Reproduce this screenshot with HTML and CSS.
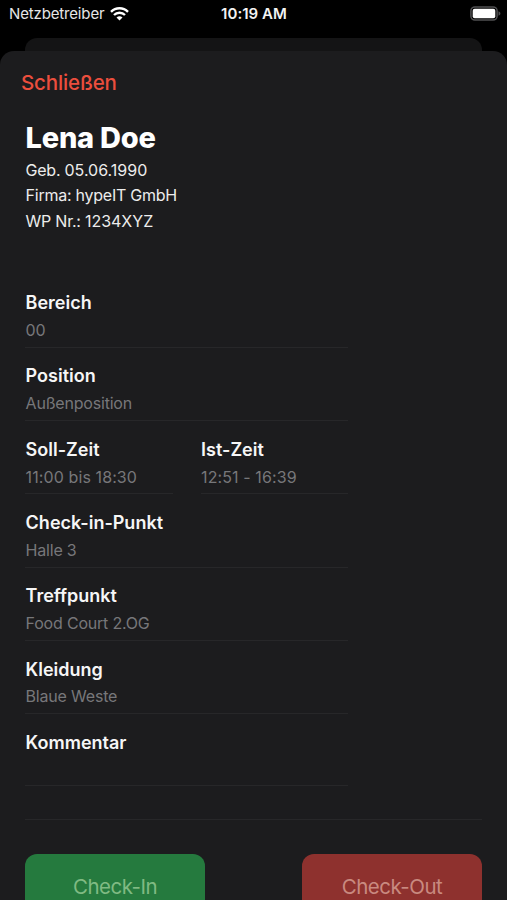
FILE: index.html
```html
<!DOCTYPE html>
<html lang="de">
<head>
    <meta charset="UTF-8">
    <meta name="viewport" content="width=device-width, initial-scale=1.0">
    <title>Schicht Details</title>
    <link rel="stylesheet" href="styles.css">
</head>
<body>
    <div class="screen">
        <header class="status-bar">
            <div class="carrier">
                <span>Netzbetreiber</span>
                <svg class="wifi" width="19" height="14" viewBox="0 0 19 14" fill="none">
                    <path d="M1 4.8a12 12 0 0 1 17 0" stroke="white" stroke-width="2.4"/>
                    <path d="M4 8a7.7 7.7 0 0 1 11 0" stroke="white" stroke-width="2.4"/>
                    <path d="M6.5 10.6a4.3 4.3 0 0 1 6 0L9.5 13.6Z" fill="white"/>
                </svg>
            </div>
            <div class="clock">10:19 AM</div>
            <svg class="battery" width="31" height="15" viewBox="0 0 31 15">
                <rect x="0.9" y="0.9" width="26.2" height="13.2" rx="4" fill="none" stroke="#505052" stroke-width="1.5"/>
                <rect x="2.7" y="2.7" width="22.6" height="9.6" rx="2" fill="white"/>
                <path d="M28.5 5.2c1.2.5 1.9 1.3 1.9 2.3s-.7 1.8-1.9 2.3z" fill="#505052"/>
            </svg>
        </header>

        <div class="sheet-behind"></div>

        <main class="sheet">
            <button class="close-button">Schließen</button>

            <section class="person">
                <h1 class="person-name">Lena Doe</h1>
                <p>Geb. <span class="digits">05.06.1990</span></p>
                <p>Firma: hypeIT GmbH</p>
                <p>WP Nr.: <span class="digits">1234XYZ</span></p>
            </section>

            <section class="fields">
                <div class="field">
                    <div class="label">Bereich</div>
                    <div class="value">00</div>
                </div>
                <div class="field">
                    <div class="label">Position</div>
                    <div class="value">Außenposition</div>
                </div>
                <div class="field-row">
                    <div class="field">
                        <div class="label">Soll-Zeit</div>
                        <div class="value digits">11:00 bis 18:30</div>
                    </div>
                    <div class="field">
                        <div class="label">Ist-Zeit</div>
                        <div class="value digits">12:51 - 16:39</div>
                    </div>
                </div>
                <div class="field">
                    <div class="label">Check-in-Punkt</div>
                    <div class="value">Halle 3</div>
                </div>
                <div class="field">
                    <div class="label">Treffpunkt</div>
                    <div class="value">Food Court 2.OG</div>
                </div>
                <div class="field">
                    <div class="label">Kleidung</div>
                    <div class="value">Blaue Weste</div>
                </div>
                <div class="field comment">
                    <div class="label">Kommentar</div>
                    <div class="value"></div>
                </div>
            </section>

            <div class="actions">
                <button class="action check-in">Check-In</button>
                <button class="action check-out">Check-Out</button>
            </div>
        </main>
    </div>
</body>
</html>
```
FILE: styles.css
```css
* {
    box-sizing: border-box;
}

body {
    margin: 0;
    background-color: #000;
    color: #fff;
    font-family: 'Inter', 'Roboto', sans-serif;
}

.screen {
    display: flex;
    flex-direction: column;
    height: 100vh;
    overflow: hidden;
}

.status-bar {
    display: grid;
    grid-template-columns: 1fr auto 1fr;
    align-items: center;
    flex: none;
    height: 38px;
    padding: 0 6px 11px 9px;
    font-size: 15px;
    color: #e6e6e6;
}

.carrier {
    display: flex;
    align-items: center;
    gap: 5.5px;
    letter-spacing: -0.15px;
}

.clock {
    margin-left: -2px;
    font-weight: 600;
    color: #f2f2f2;
    letter-spacing: 0.05px;
}

.battery {
    justify-self: end;
}

.sheet-behind {
    flex: none;
    height: 13px;
    margin: 0 25px;
    background-color: #141415;
    border-radius: 12px 12px 0 0;
}

.sheet {
    flex: 1;
    min-height: 0;
    padding: 19px 25px 0;
    background-color: #1c1c1e;
    border-radius: 14px 14px 0 0;
}

button {
    font-family: inherit;
    border: none;
}

.close-button {
    display: block;
    margin-left: -4px;
    padding: 0;
    background: none;
    color: #eb4e3d;
    font-size: 20.5px;
    font-weight: 500;
    line-height: 26px;
    letter-spacing: -0.15px;
}

.person {
    padding: 23px 0 0 0.6px;
}

.person-name {
    margin: 0 0 1px;
    font-size: 29px;
    font-weight: 800;
    line-height: 38px;
    letter-spacing: -0.25px;
}

.person p {
    margin: 0;
    font-size: 16px;
    line-height: 25.3px;
    color: #ececec;
    letter-spacing: -0.25px;
}

.person .digits {
    letter-spacing: 0;
}

.fields {
    width: 323px;
    padding-top: 40.7px;
}

.field {
    flex: 1;
    height: 73.3px;
    padding: 15.5px 0 0 0.6px;
    border-bottom: 1px solid #272729;
}

.field-row {
    display: flex;
    gap: 28px;
}

.label {
    font-size: 18px;
    font-weight: 600;
    line-height: 25px;
    color: #f6f6f6;
}

.value {
    margin-top: 2.9px;
    font-size: 16px;
    line-height: 25px;
    color: #77777a;
    letter-spacing: -0.2px;
}

.value.digits {
    letter-spacing: 0.1px;
}

.comment {
    height: 71.3px;
}

.actions {
    display: flex;
    justify-content: space-between;
    margin-top: 33.5px;
    padding-top: 34px;
    border-top: 1px solid #272729;
}

.action {
    width: 180px;
    height: 65px;
    border-radius: 12px;
    font-size: 20.5px;
    letter-spacing: -0.5px;
}

.check-in {
    background-color: #257a3e;
    color: #80ba83;
}

.check-out {
    background-color: #8e312e;
    color: #c98a80;
}
```
